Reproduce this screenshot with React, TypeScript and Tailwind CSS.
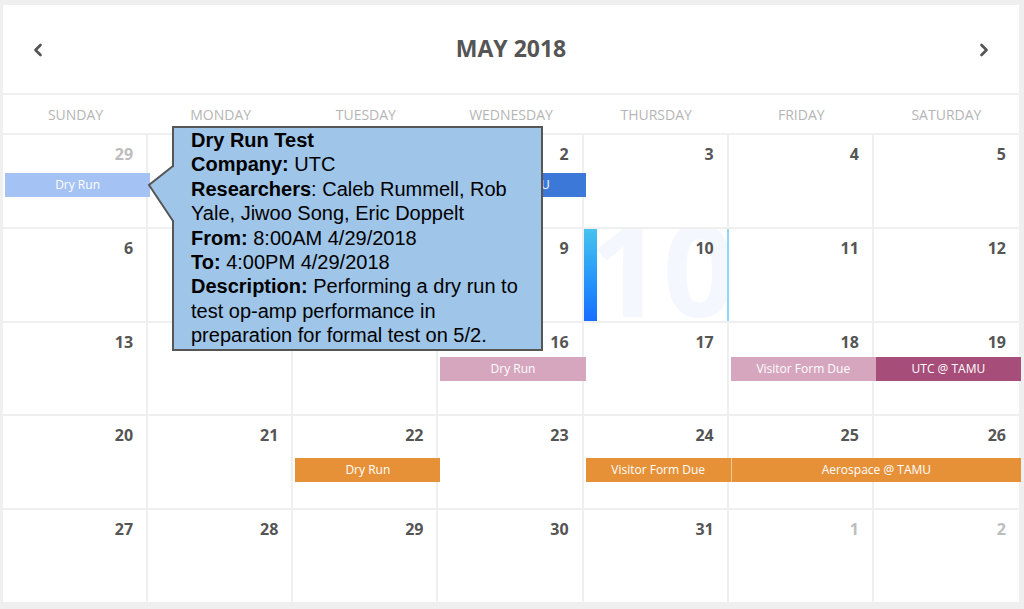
import React from 'react';
import { ChevronLeft, ChevronRight } from 'lucide-react';

type CalEvent = { title: string; start: number; span: number; color: string };
type Day = { n: number; muted?: boolean; today?: boolean };
type Week = { days: Day[]; events: CalEvent[]; rows: string };

const DAY_NAMES = ['SUNDAY', 'MONDAY', 'TUESDAY', 'WEDNESDAY', 'THURSDAY', 'FRIDAY', 'SATURDAY'];

const COL_START = ['col-start-1', 'col-start-2', 'col-start-3', 'col-start-4', 'col-start-5', 'col-start-6', 'col-start-7'];
const COL_SPAN = ['col-span-1', 'col-span-2', 'col-span-3', 'col-span-4', 'col-span-5', 'col-span-6', 'col-span-7'];

const d = (from: number, to: number): Day[] => {
  const out: Day[] = [];
  for (let i = from; i <= to; i++) out.push({ n: i });
  return out;
};

const WEEKS: Week[] = [
  {
    days: [{ n: 29, muted: true }, { n: 30, muted: true }, ...d(1, 5)],
    events: [
      { title: 'Dry Run', start: 0, span: 1, color: 'bg-[#a4c2f4]' },
      { title: 'UTC @ TAMU', start: 3, span: 1, color: 'bg-[#3c78d8]' },
    ],
    rows: 'grid-rows-[38px_24px_1fr]',
  },
  {
    days: d(6, 12).map(x => (x.n === 10 ? { ...x, today: true } : x)),
    events: [],
    rows: 'grid-rows-[38px_24px_1fr]',
  },
  {
    days: d(13, 19),
    events: [
      { title: 'Dry Run', start: 3, span: 1, color: 'bg-[#d5a6bd]' },
      { title: 'Visitor Form Due', start: 5, span: 1, color: 'bg-[#d5a6bd]' },
      { title: 'UTC @ TAMU', start: 6, span: 1, color: 'bg-[#a64d79]' },
    ],
    rows: 'grid-rows-[34px_24px_1fr]',
  },
  {
    days: d(20, 26),
    events: [
      { title: 'Dry Run', start: 2, span: 1, color: 'bg-[#e69138]' },
      { title: 'Visitor Form Due', start: 4, span: 1, color: 'bg-[#e69138]' },
      { title: 'Aerospace @ TAMU', start: 5, span: 2, color: 'bg-[#e69138] border-l border-[#f3c99c]' },
    ],
    rows: 'grid-rows-[42px_24px_1fr]',
  },
  {
    days: [...d(27, 31), { n: 1, muted: true }, { n: 2, muted: true }],
    events: [],
    rows: 'grid-rows-[38px_24px_1fr]',
  },
];

const DayCell: React.FC<{ day: Day; col: number }> = ({ day, col }) => (
  <div
    className={`${COL_START[col]} row-start-1 row-end-4 relative overflow-hidden ${
      col < 6 ? 'border-r-2' : ''
    } ${day.today ? 'border-[#8fd6f7]' : 'border-[#efefef]'}`}
  >
    {day.today && (
      <>
        <span className="absolute top-[-25px] left-[6px] text-[128px] font-bold leading-none text-[#f4f8fe] select-none">
          {day.n}
        </span>
        <div className="absolute left-0 top-0 bottom-0 w-[13px] bg-gradient-to-b from-[#47c2ef] to-[#1b6dff]" />
      </>
    )}
    <div
      className={`relative text-right pr-[13px] pt-[7px] text-[16px] leading-[24px] font-bold ${
        day.muted ? 'text-[#bdbdbd]' : 'text-[#555]'
      }`}
    >
      {day.n}
    </div>
  </div>
);

const WeekRow: React.FC<{ week: Week; last: boolean }> = ({ week, last }) => (
  <div className={`flex-1 grid grid-cols-7 ${week.rows} ${last ? '' : 'border-b-2 border-[#efefef]'}`}>
    {week.days.map((day, i) => (
      <DayCell key={i} day={day} col={i} />
    ))}
    {week.events.map((ev, i) => (
      <div
        key={i}
        className={`${COL_START[ev.start]} ${COL_SPAN[ev.span - 1]} row-start-2 ml-[2px] -mr-[2px] ${ev.color} relative text-white text-[12px] flex items-center justify-center whitespace-nowrap`}
      >
        {ev.title}
      </div>
    ))}
  </div>
);

const Tooltip: React.FC = () => (
  <div
    className="absolute left-[169px] top-[121px] w-[371px] bg-[#9fc5e8] border-2 border-[#565656] pl-[17px] pr-[5px] pb-[1px] text-black text-[20px] leading-[24.4px]"
    style={{ fontFamily: '"Liberation Sans", Arial, sans-serif' }}
  >
    <svg className="absolute left-[-27px] top-[35px]" width="28" height="62" viewBox="0 0 28 62">
      <rect x="24" y="4" width="4" height="53" fill="#9fc5e8" />
      <path d="M26 3 L2 22 L26 58" fill="#9fc5e8" stroke="#565656" strokeWidth="2" strokeLinejoin="miter" />
    </svg>
    <div className="font-bold">Dry Run Test</div>
    <div>
      <b>Company:</b> UTC
    </div>
    <div>
      <b>Researchers</b>: Caleb Rummell, Rob Yale, Jiwoo Song, Eric Doppelt
    </div>
    <div>
      <b>From:</b> 8:00AM 4/29/2018
    </div>
    <div>
      <b>To:</b> 4:00PM 4/29/2018
    </div>
    <div>
      <b>Description:</b> Performing a dry run to test op-amp performance in preparation for formal test on 5/2.
    </div>
  </div>
);

export default function App() {
  return (
    <div
      className="w-[1024px] h-[609px] bg-[#efefef] pl-[3px] pt-[5px]"
      style={{ fontFamily: '"Open Sans", "Noto Sans", sans-serif' }}
    >
      <div className="relative w-[1016px] h-[597px] bg-white flex flex-col">
        <div className="h-[90px] shrink-0 flex items-center justify-between px-[25px] border-b-2 border-[#efefef] text-[#555]">
          <ChevronLeft size={20} strokeWidth={3.2} className="mt-[2px]" />
          <h1 className="text-[23px] font-bold mb-[1px]">MAY 2018</h1>
          <ChevronRight size={20} strokeWidth={3.2} className="mt-[2px]" />
        </div>
        <div className="h-[40px] shrink-0 grid grid-cols-7 items-center border-b-2 border-[#efefef]">
          {DAY_NAMES.map(n => (
            <div key={n} className="text-center text-[14px] text-[#b5b5b5] pt-[1px]">
              {n}
            </div>
          ))}
        </div>
        <div className="flex-1 flex flex-col">
          {WEEKS.map((w, i) => (
            <WeekRow key={i} week={w} last={i === WEEKS.length - 1} />
          ))}
        </div>
        <Tooltip />
      </div>
    </div>
  );
}
